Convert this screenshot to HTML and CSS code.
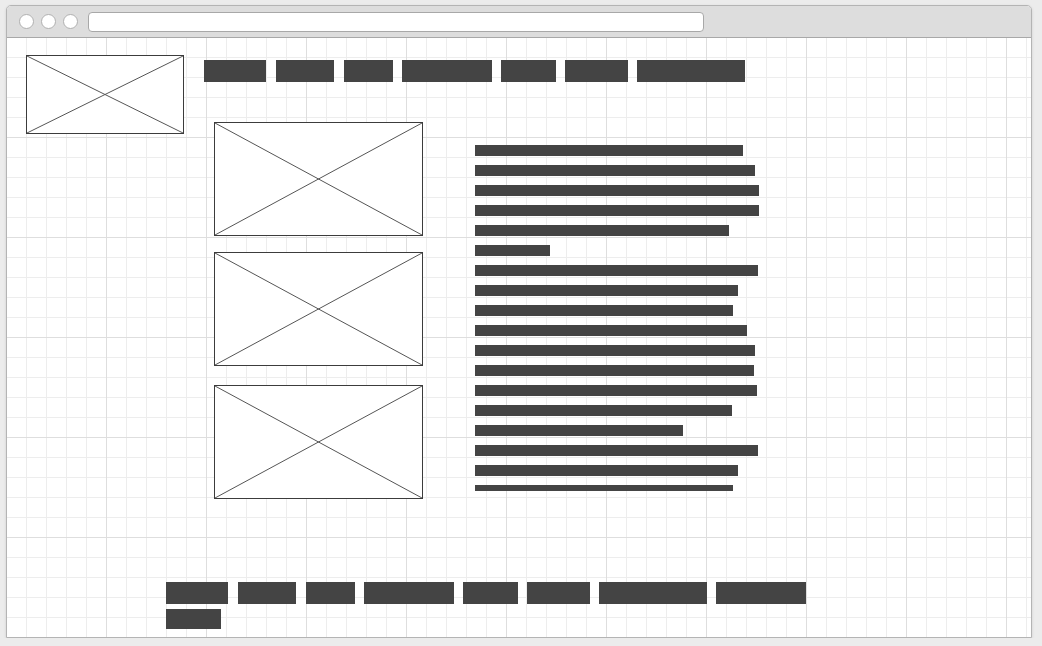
FILE: index.html
```html
<!DOCTYPE html>
<html lang="en">
<head>
  <meta charset="UTF-8">
  <meta name="viewport" content="width=device-width, initial-scale=1.0">
  <title>Wireframe</title>
  <link rel="stylesheet" href="styles.css">
</head>
<body>
  <div class="window">
    <div class="titlebar">
      <span class="dot"></span>
      <span class="dot"></span>
      <span class="dot"></span>
      <div class="address"></div>
    </div>

    <div class="canvas">
      <div class="top">
        <div class="placeholder logo">
          <svg viewBox="0 0 100 100" preserveAspectRatio="none"><line x1="0" y1="0" x2="100" y2="100"/><line x1="0" y1="100" x2="100" y2="0"/></svg>
        </div>

        <div class="right">
          <!-- navigation -->
          <div class="nav">
            <span class="bar w62 wide"></span>
            <span class="bar w58 wide"></span>
            <span class="bar w49"></span>
            <span class="bar w90"></span>
            <span class="bar w55"></span>
            <span class="bar w63"></span>
            <span class="bar w108"></span>
          </div>

          <div class="main">
            <div class="pictures">
              <div class="placeholder photo">
                <svg viewBox="0 0 100 100" preserveAspectRatio="none"><line x1="0" y1="0" x2="100" y2="100"/><line x1="0" y1="100" x2="100" y2="0"/></svg>
              </div>
              <div class="placeholder photo">
                <svg viewBox="0 0 100 100" preserveAspectRatio="none"><line x1="0" y1="0" x2="100" y2="100"/><line x1="0" y1="100" x2="100" y2="0"/></svg>
              </div>
              <div class="placeholder photo">
                <svg viewBox="0 0 100 100" preserveAspectRatio="none"><line x1="0" y1="0" x2="100" y2="100"/><line x1="0" y1="100" x2="100" y2="0"/></svg>
              </div>
            </div>

            <!-- body copy -->
            <div class="text">
              <span class="line" style="width: 268px"></span>
              <span class="line" style="width: 280px"></span>
              <span class="line" style="width: 284px"></span>
              <span class="line" style="width: 284px"></span>
              <span class="line" style="width: 254px"></span>
              <span class="line" style="width: 75px"></span>
              <span class="line" style="width: 283px"></span>
              <span class="line" style="width: 263px"></span>
              <span class="line" style="width: 258px"></span>
              <span class="line" style="width: 272px"></span>
              <span class="line" style="width: 280px"></span>
              <span class="line" style="width: 279px"></span>
              <span class="line" style="width: 282px"></span>
              <span class="line" style="width: 257px"></span>
              <span class="line" style="width: 208px"></span>
              <span class="line" style="width: 283px"></span>
              <span class="line" style="width: 263px"></span>
              <span class="line last" style="width: 258px"></span>
            </div>
          </div>
        </div>
      </div>

      <!-- footer links -->
      <div class="footer">
        <span class="bar w62 wide"></span>
        <span class="bar w58 wide"></span>
        <span class="bar w49"></span>
        <span class="bar w90"></span>
        <span class="bar w55"></span>
        <span class="bar w63"></span>
        <span class="bar w108"></span>
        <span class="bar w90"></span>
        <span class="bar w55 short"></span>
      </div>
    </div>
  </div>
</body>
</html>
```

FILE: styles.css
```css
body {
  font-family: 'Liberation Sans', Arial, sans-serif;
  background-color: #ececec;
  margin: 0;
  padding: 5px 0 0 6px;
}
.window {
  width: 1024px;
  height: 631px;
  border: 1px solid #b4b4b4;
  border-radius: 5px 5px 0 0;
  background-color: white;
  box-shadow: 0 1px 3px rgba(0, 0, 0, 0.12);
  display: flex;
  flex-direction: column;
  overflow: hidden;
}
.titlebar {
  height: 31px;
  flex-shrink: 0;
  background-color: #dddddd;
  border-bottom: 1px solid #a8a8a8;
  display: flex;
  align-items: center;
  padding: 0 12px;
}
.dot {
  width: 13px;
  height: 13px;
  border: 1px solid #b0b0b0;
  border-radius: 50%;
  background-color: white;
  margin-right: 7px;
}
.address {
  width: 614px;
  height: 18px;
  margin-left: 3px;
  margin-top: 1px;
  background-color: white;
  border: 1px solid #a8a8a8;
  border-radius: 4px;
}
.canvas {
  flex-grow: 1;
  padding: 17px 0 0 19px;
  background-color: white;
  background-image:
    linear-gradient(to right, transparent 99px, #dedede 99px),
    linear-gradient(to bottom, transparent 99px, #dedede 99px),
    linear-gradient(to right, transparent 19px, #ededed 19px),
    linear-gradient(to bottom, transparent 19px, #ededed 19px);
  background-size: 100px 100px, 100px 100px, 20px 20px, 20px 20px;
}
.top {
  display: flex;
  align-items: flex-start;
}
.placeholder {
  border: 1px solid #3c3c3c;
  box-sizing: border-box;
  background-color: white;
}
.placeholder svg {
  display: block;
  width: 100%;
  height: 100%;
}
.placeholder line {
  stroke: #555;
  stroke-width: 1;
  vector-effect: non-scaling-stroke;
}
.logo {
  width: 158px;
  height: 79px;
  flex-shrink: 0;
}
.right {
  margin-left: 20px;
}
.nav {
  display: flex;
  gap: 9px;
  margin-top: 5px;
}
.bar {
  display: block;
  height: 22px;
  background-color: #444444;
}
.bar.wide {
  margin-right: 1px;
}
.w49 { width: 49px; }
.w55 { width: 55px; }
.w58 { width: 58px; }
.w62 { width: 62px; }
.w63 { width: 63px; }
.w90 { width: 90px; }
.w108 { width: 108px; }
.main {
  display: flex;
  align-items: flex-start;
  margin-top: 40px;
  padding-left: 10px;
}
.pictures {
  display: flex;
  flex-direction: column;
}
.photo {
  width: 209px;
  height: 114px;
  margin-bottom: 16px;
}
.photo:nth-child(3) {
  margin-top: 3px;
  margin-bottom: 0;
}
.text {
  display: flex;
  flex-direction: column;
  gap: 9px;
  margin-left: 52px;
  margin-top: 23px;
}
.line {
  display: block;
  height: 11px;
  background-color: #444444;
}
.line.last {
  height: 6px;
}
.footer {
  display: flex;
  flex-wrap: wrap;
  align-items: flex-start;
  column-gap: 9px;
  row-gap: 5px;
  width: 660px;
  margin: 83px 0 0 140px;
}
.footer .short {
  height: 20px;
}
```
